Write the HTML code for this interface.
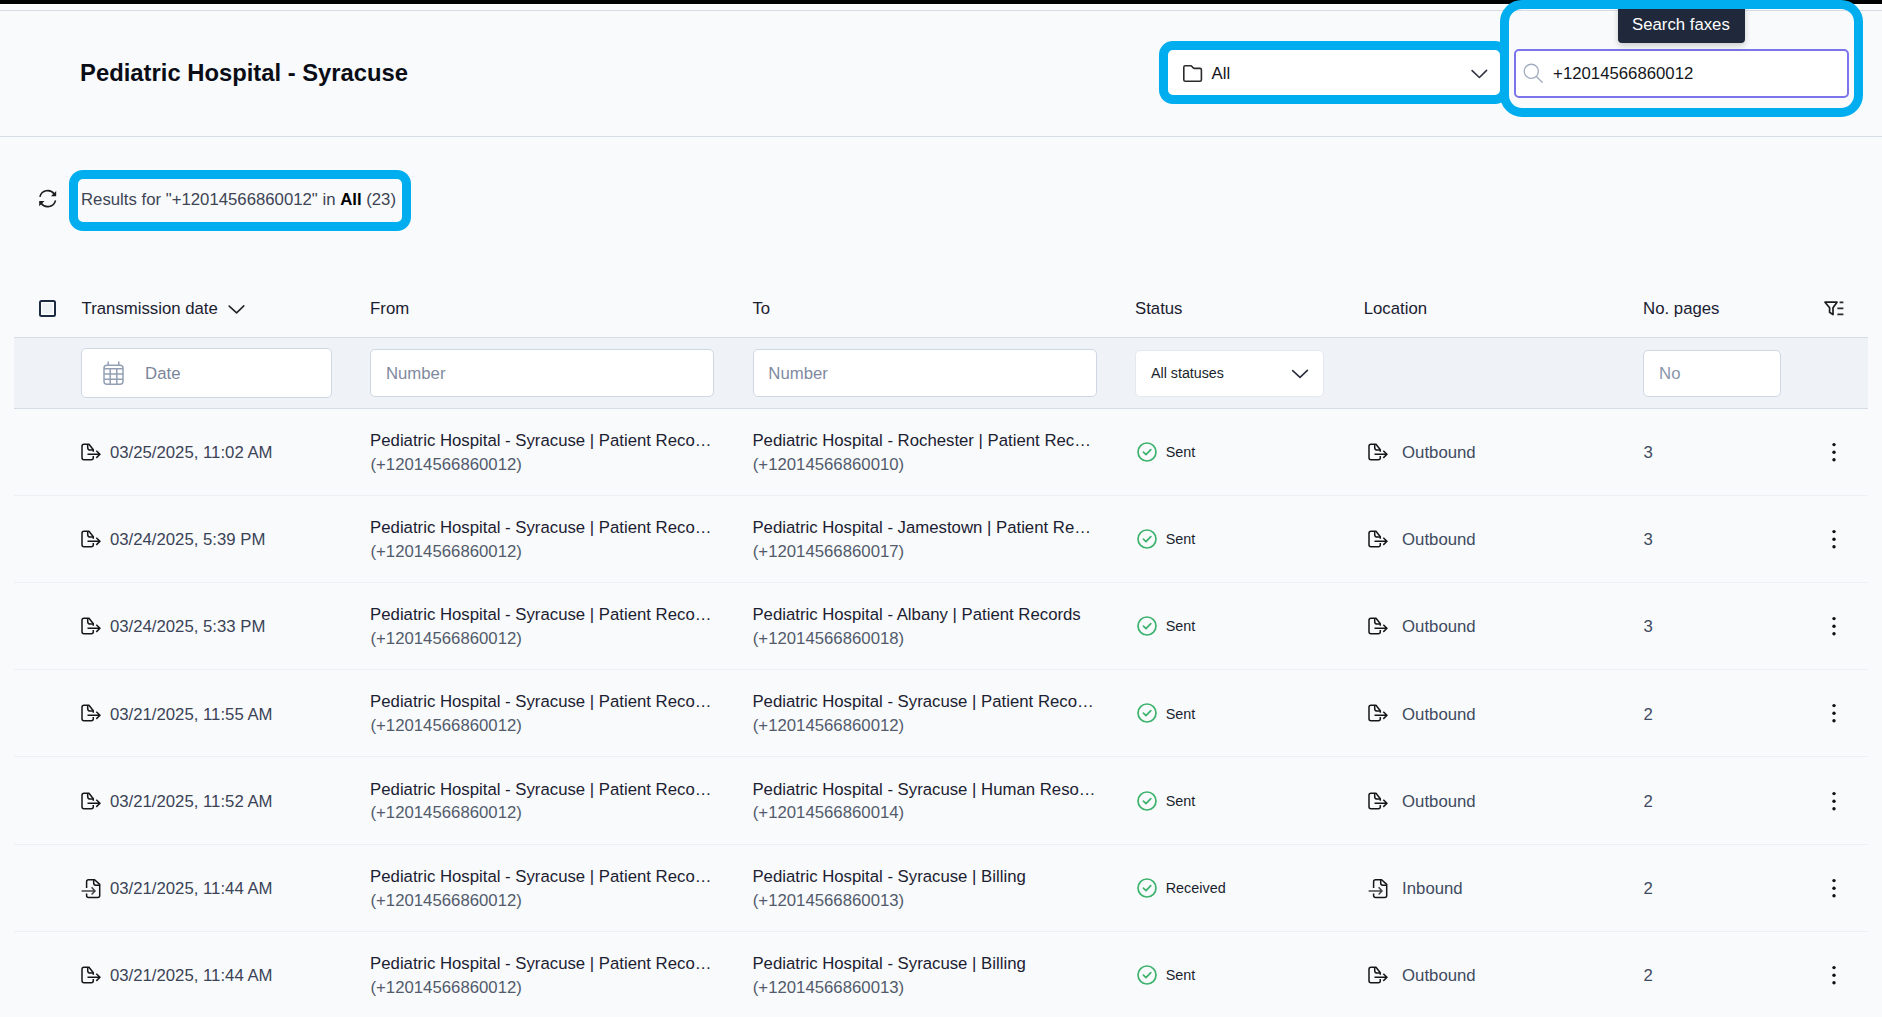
<!DOCTYPE html>
<html><head><meta charset="utf-8"><style>
html,body{margin:0;padding:0;}
body{width:1882px;height:1017px;overflow:hidden;position:relative;background:#f8fafc;font-family:"Liberation Sans", sans-serif;}
.t{position:absolute;white-space:nowrap;line-height:20px;}
b{font-weight:bold}
</style></head><body>
<div style="position:absolute;left:0px;top:0px;width:1882px;height:4px;background:#000"></div>
<div style="position:absolute;left:0px;top:4px;width:1882px;height:1px;background:#fff"></div>
<div style="position:absolute;left:0px;top:10px;width:1882px;height:1px;background:#d5dce6"></div>
<div style="position:absolute;left:0px;top:136px;width:1882px;height:1px;background:#d5dce6"></div>
<div class="t" style="left:80.1px;top:63.400000000000006px;font-size:23.8px;color:#0b0d16;font-weight:bold;">Pediatric Hospital - Syracuse</div>
<div style="position:absolute;left:1163px;top:46px;width:342px;height:54px;background:#fff;border-radius:4px"></div>
<svg style="position:absolute;left:1182px;top:64px;overflow:visible" width="22" height="19" viewBox="0 0 22 19"><path d="M1.8 3.2 Q1.8 1.8 3.2 1.8 H8.6 Q9.4 1.8 10 2.6 L10.8 3.6 Q11.4 4.4 12.2 4.4 H18 Q19.4 4.4 19.4 5.8 V15.8 Q19.4 17.2 18 17.2 H3.2 Q1.8 17.2 1.8 15.8 Z" fill="none" stroke="#2b2b2b" stroke-width="1.6" stroke-linejoin="round"/></svg>
<div class="t" style="left:1211.5px;top:64.2px;font-size:16.75px;color:#111318;font-weight:normal;">All</div>
<svg style="position:absolute;left:1470px;top:68px;overflow:visible" width="18" height="12" viewBox="0 0 18 12"><path d="M2.1 2.6 L9.4 9.5 L16.6 2.4" fill="none" stroke="#30343f" stroke-width="1.6" stroke-linecap="round" stroke-linejoin="round"/></svg>
<div style="position:absolute;left:1513.6px;top:49px;width:335.8px;height:48.5px;background:#fff;border:2px solid #7b74ea;border-radius:5px;box-sizing:border-box"></div>
<svg style="position:absolute;left:1522px;top:62px;overflow:visible" width="24" height="24" viewBox="0 0 24 24"><circle cx="9.3" cy="9.3" r="7.1" fill="none" stroke="#a2adbf" stroke-width="1.35"/><path d="M14.4 14.6 L20.2 20.3" stroke="#a2adbf" stroke-width="1.35" stroke-linecap="round"/></svg>
<div class="t" style="left:1553.1px;top:63.599999999999994px;font-size:16.75px;color:#141720;font-weight:normal;">+12014566860012</div>
<div style="position:absolute;left:1618px;top:2px;width:126.5px;height:41px;background:#1f293b;border-radius:4px;box-shadow:0 3px 6px rgba(0,0,0,0.18)"></div>
<div class="t" style="left:1632.0px;top:15.399999999999999px;font-size:16.75px;color:#ffffff;font-weight:normal;">Search faxes</div>
<svg style="position:absolute;left:37px;top:188px;overflow:visible" width="22" height="22" viewBox="0 0 22 22"><path d="M2.9 8.9 A8 8 0 0 1 17.2 6.0" fill="none" stroke="#1c1c1c" stroke-width="1.55"/><path d="M19.2 2.9 L19.2 8.2 L13.9 8.2 Z" fill="#1c1c1c"/><path d="M18.5 12.3 A8 8 0 0 1 4.15 15.2" fill="none" stroke="#1c1c1c" stroke-width="1.55"/><path d="M2.2 18.3 L2.2 13 L7.5 13 Z" fill="#1c1c1c"/></svg>
<div class="t" style="left:81.0px;top:189.7px;font-size:16.75px;color:#3d4454;font-weight:normal;">Results for "+12014566860012" in <b style="color:#000">All</b> (23)</div>
<div style="position:absolute;left:39.4px;top:300.2px;width:16.6px;height:16.6px;border:2.5px solid #1c2a42;border-radius:2.5px;background:#eef2f7;box-shadow:inset 0 0 0 1.2px #fff;box-sizing:border-box"></div>
<div class="t" style="left:81.6px;top:299.4px;font-size:16.75px;color:#1b2030;font-weight:normal;">Transmission date</div>
<svg style="position:absolute;left:228px;top:304px;overflow:visible" width="18" height="11" viewBox="0 0 18 11"><path d="M1.2 2.1 L8.6 8.9 L15.8 1.9" fill="none" stroke="#252525" stroke-width="1.6" stroke-linecap="round" stroke-linejoin="round"/></svg>
<div class="t" style="left:370.1px;top:299.4px;font-size:16.75px;color:#1b2030;font-weight:normal;">From</div>
<div class="t" style="left:752.4px;top:299.4px;font-size:16.75px;color:#1b2030;font-weight:normal;">To</div>
<div class="t" style="left:1135.0px;top:299.4px;font-size:16.75px;color:#1b2030;font-weight:normal;">Status</div>
<div class="t" style="left:1363.7px;top:299.4px;font-size:16.75px;color:#1b2030;font-weight:normal;">Location</div>
<div class="t" style="left:1643.1px;top:299.4px;font-size:16.75px;color:#1b2030;font-weight:normal;">No. pages</div>
<svg style="position:absolute;left:1823px;top:300px;overflow:visible" width="23" height="17" viewBox="0 0 23 17"><path d="M2 2.2 H14 L10 7.8 V14.6 L6.6 12.2 V7.8 Z" fill="none" stroke="#1c1c1c" stroke-width="1.7" stroke-linejoin="round"/><path d="M16.6 2.4 H20.4 M14.4 8.4 H20.4 M14.4 14.4 H20.4" stroke="#2a2a2a" stroke-width="1.7"/></svg>
<div style="position:absolute;left:14px;top:337px;width:1854px;height:71.5px;background:#eff3f8;border-top:1px solid #d5dce6;border-bottom:1px solid #d5dce6;box-sizing:border-box"></div>
<div style="position:absolute;left:81px;top:348px;width:251px;height:49.8px;background:#fff;border:1.2px solid #cfd7e2;border-radius:5px;box-sizing:border-box"></div>
<svg style="position:absolute;left:102px;top:360px;overflow:visible" width="24" height="26" viewBox="0 0 24 26"><rect x="2" y="5.2" width="19" height="19" rx="3" fill="none" stroke="#93a0b4" stroke-width="1.5"/><path d="M2 8.8 H21 M2 14 H21 M2 19.2 H21 M8.2 8.8 V24.2 M14.8 8.8 V24.2 M6.2 1.4 V5.2 M16.8 1.4 V5.2" stroke="#93a0b4" stroke-width="1.5"/></svg>
<div class="t" style="left:145.1px;top:363.8px;font-size:16.75px;color:#7a8599;font-weight:normal;">Date</div>
<div style="position:absolute;left:370.3px;top:349.1px;width:344.2px;height:47.6px;background:#fff;border:1.2px solid #cfd7e2;border-radius:5px;box-sizing:border-box"></div>
<div class="t" style="left:385.9px;top:363.7px;font-size:16.75px;color:#7f8aa0;font-weight:normal;">Number</div>
<div style="position:absolute;left:752.8px;top:349.1px;width:344.2px;height:47.6px;background:#fff;border:1.2px solid #cfd7e2;border-radius:5px;box-sizing:border-box"></div>
<div class="t" style="left:768.3px;top:363.7px;font-size:16.75px;color:#7f8aa0;font-weight:normal;">Number</div>
<div style="position:absolute;left:1135.2px;top:349.5px;width:189.2px;height:47px;background:#fff;border:1px solid #e4e9f0;border-radius:5px;box-sizing:border-box"></div>
<div class="t" style="left:1151.0px;top:362.6px;font-size:14.25px;color:#1a1f2c;font-weight:normal;">All statuses</div>
<svg style="position:absolute;left:1291px;top:368px;overflow:visible" width="18" height="12" viewBox="0 0 18 12"><path d="M1.7 2.6 L9 9.4 L16.4 2.4" fill="none" stroke="#2a2e3c" stroke-width="1.6" stroke-linecap="round" stroke-linejoin="round"/></svg>
<div style="position:absolute;left:1643.4px;top:349.6px;width:138px;height:47px;background:#fff;border:1.2px solid #cfd7e2;border-radius:5px;box-sizing:border-box"></div>
<div class="t" style="left:1659.1px;top:363.6px;font-size:16.75px;color:#8a96aa;font-weight:normal;">No</div>
<svg style="position:absolute;left:81px;top:442.70000000000005px;overflow:visible" width="22" height="20" viewBox="0 0 22 20"><path d="M12.3 8.8 V6.8 L8 1.3 H3 Q1 1.3 1 3.3 V14.8 Q1 16.8 3 16.8 H10.3 Q12.3 16.8 12.3 14.8 V12.9" fill="none" stroke="#161616" stroke-width="1.5" stroke-linejoin="round"/><path d="M6.7 1.5 V4.4 Q6.7 7 9.3 7 H12.2" fill="none" stroke="#161616" stroke-width="1.5"/><path d="M6.5 11.3 H18.8 M15.3 7.7 L18.9 11.3 L15.3 14.9" fill="none" stroke="#161616" stroke-width="1.5"/></svg>
<svg style="position:absolute;left:1367.8px;top:442.70000000000005px;overflow:visible" width="22" height="20" viewBox="0 0 22 20"><path d="M12.3 8.8 V6.8 L8 1.3 H3 Q1 1.3 1 3.3 V14.8 Q1 16.8 3 16.8 H10.3 Q12.3 16.8 12.3 14.8 V12.9" fill="none" stroke="#161616" stroke-width="1.5" stroke-linejoin="round"/><path d="M6.7 1.5 V4.4 Q6.7 7 9.3 7 H12.2" fill="none" stroke="#161616" stroke-width="1.5"/><path d="M6.5 11.3 H18.8 M15.3 7.7 L18.9 11.3 L15.3 14.9" fill="none" stroke="#161616" stroke-width="1.5"/></svg>
<div class="t" style="left:109.9px;top:442.90000000000003px;font-size:16.75px;color:#3b4356;font-weight:normal;">03/25/2025, 11:02 AM</div>
<div class="t" style="left:370.1px;top:430.80000000000007px;font-size:16.75px;color:#1c2131;font-weight:normal;">Pediatric Hospital - Syracuse | Patient Reco…</div>
<div class="t" style="left:370.5px;top:454.50000000000006px;font-size:16.75px;color:#525a6b;font-weight:normal;">(+12014566860012)</div>
<div class="t" style="left:752.4px;top:430.80000000000007px;font-size:16.75px;color:#1c2131;font-weight:normal;">Pediatric Hospital - Rochester | Patient Rec…</div>
<div class="t" style="left:752.8px;top:454.50000000000006px;font-size:16.75px;color:#525a6b;font-weight:normal;">(+12014566860010)</div>
<svg style="position:absolute;left:1137px;top:441.70000000000005px;overflow:visible" width="20" height="20" viewBox="0 0 20 20"><circle cx="10" cy="10" r="9" fill="none" stroke="#3db26d" stroke-width="1.7"/><path d="M6.4 10.2 L9 12.6 L13.8 7.6" fill="none" stroke="#3db26d" stroke-width="1.7" stroke-linecap="round" stroke-linejoin="round"/></svg>
<div class="t" style="left:1165.7px;top:442.00000000000006px;font-size:14.4px;color:#1a1f2c;font-weight:normal;">Sent</div>
<div class="t" style="left:1402.1px;top:442.90000000000003px;font-size:16.75px;color:#3f4a60;font-weight:normal;">Outbound</div>
<div class="t" style="left:1643.4px;top:442.90000000000003px;font-size:16.75px;color:#3f4a60;font-weight:normal;">3</div>
<svg style="position:absolute;left:1830px;top:441.70000000000005px;overflow:visible" width="8" height="20" viewBox="0 0 8 20"><circle cx="4" cy="2.6" r="1.7" fill="#111"/><circle cx="4" cy="10.2" r="1.7" fill="#111"/><circle cx="4" cy="17.8" r="1.7" fill="#111"/></svg>
<div style="position:absolute;left:14px;top:495px;width:1854px;height:1px;background:#edf0f4"></div>
<svg style="position:absolute;left:81px;top:529.9px;overflow:visible" width="22" height="20" viewBox="0 0 22 20"><path d="M12.3 8.8 V6.8 L8 1.3 H3 Q1 1.3 1 3.3 V14.8 Q1 16.8 3 16.8 H10.3 Q12.3 16.8 12.3 14.8 V12.9" fill="none" stroke="#161616" stroke-width="1.5" stroke-linejoin="round"/><path d="M6.7 1.5 V4.4 Q6.7 7 9.3 7 H12.2" fill="none" stroke="#161616" stroke-width="1.5"/><path d="M6.5 11.3 H18.8 M15.3 7.7 L18.9 11.3 L15.3 14.9" fill="none" stroke="#161616" stroke-width="1.5"/></svg>
<svg style="position:absolute;left:1367.8px;top:529.9px;overflow:visible" width="22" height="20" viewBox="0 0 22 20"><path d="M12.3 8.8 V6.8 L8 1.3 H3 Q1 1.3 1 3.3 V14.8 Q1 16.8 3 16.8 H10.3 Q12.3 16.8 12.3 14.8 V12.9" fill="none" stroke="#161616" stroke-width="1.5" stroke-linejoin="round"/><path d="M6.7 1.5 V4.4 Q6.7 7 9.3 7 H12.2" fill="none" stroke="#161616" stroke-width="1.5"/><path d="M6.5 11.3 H18.8 M15.3 7.7 L18.9 11.3 L15.3 14.9" fill="none" stroke="#161616" stroke-width="1.5"/></svg>
<div class="t" style="left:109.9px;top:530.1px;font-size:16.75px;color:#3b4356;font-weight:normal;">03/24/2025, 5:39 PM</div>
<div class="t" style="left:370.1px;top:518.0px;font-size:16.75px;color:#1c2131;font-weight:normal;">Pediatric Hospital - Syracuse | Patient Reco…</div>
<div class="t" style="left:370.5px;top:541.6999999999999px;font-size:16.75px;color:#525a6b;font-weight:normal;">(+12014566860012)</div>
<div class="t" style="left:752.4px;top:518.0px;font-size:16.75px;color:#1c2131;font-weight:normal;">Pediatric Hospital - Jamestown | Patient Re…</div>
<div class="t" style="left:752.8px;top:541.6999999999999px;font-size:16.75px;color:#525a6b;font-weight:normal;">(+12014566860017)</div>
<svg style="position:absolute;left:1137px;top:528.9px;overflow:visible" width="20" height="20" viewBox="0 0 20 20"><circle cx="10" cy="10" r="9" fill="none" stroke="#3db26d" stroke-width="1.7"/><path d="M6.4 10.2 L9 12.6 L13.8 7.6" fill="none" stroke="#3db26d" stroke-width="1.7" stroke-linecap="round" stroke-linejoin="round"/></svg>
<div class="t" style="left:1165.7px;top:529.1999999999999px;font-size:14.4px;color:#1a1f2c;font-weight:normal;">Sent</div>
<div class="t" style="left:1402.1px;top:530.1px;font-size:16.75px;color:#3f4a60;font-weight:normal;">Outbound</div>
<div class="t" style="left:1643.4px;top:530.1px;font-size:16.75px;color:#3f4a60;font-weight:normal;">3</div>
<svg style="position:absolute;left:1830px;top:528.9px;overflow:visible" width="8" height="20" viewBox="0 0 8 20"><circle cx="4" cy="2.6" r="1.7" fill="#111"/><circle cx="4" cy="10.2" r="1.7" fill="#111"/><circle cx="4" cy="17.8" r="1.7" fill="#111"/></svg>
<div style="position:absolute;left:14px;top:582px;width:1854px;height:1px;background:#edf0f4"></div>
<svg style="position:absolute;left:81px;top:617.1px;overflow:visible" width="22" height="20" viewBox="0 0 22 20"><path d="M12.3 8.8 V6.8 L8 1.3 H3 Q1 1.3 1 3.3 V14.8 Q1 16.8 3 16.8 H10.3 Q12.3 16.8 12.3 14.8 V12.9" fill="none" stroke="#161616" stroke-width="1.5" stroke-linejoin="round"/><path d="M6.7 1.5 V4.4 Q6.7 7 9.3 7 H12.2" fill="none" stroke="#161616" stroke-width="1.5"/><path d="M6.5 11.3 H18.8 M15.3 7.7 L18.9 11.3 L15.3 14.9" fill="none" stroke="#161616" stroke-width="1.5"/></svg>
<svg style="position:absolute;left:1367.8px;top:617.1px;overflow:visible" width="22" height="20" viewBox="0 0 22 20"><path d="M12.3 8.8 V6.8 L8 1.3 H3 Q1 1.3 1 3.3 V14.8 Q1 16.8 3 16.8 H10.3 Q12.3 16.8 12.3 14.8 V12.9" fill="none" stroke="#161616" stroke-width="1.5" stroke-linejoin="round"/><path d="M6.7 1.5 V4.4 Q6.7 7 9.3 7 H12.2" fill="none" stroke="#161616" stroke-width="1.5"/><path d="M6.5 11.3 H18.8 M15.3 7.7 L18.9 11.3 L15.3 14.9" fill="none" stroke="#161616" stroke-width="1.5"/></svg>
<div class="t" style="left:109.9px;top:617.3000000000001px;font-size:16.75px;color:#3b4356;font-weight:normal;">03/24/2025, 5:33 PM</div>
<div class="t" style="left:370.1px;top:605.2px;font-size:16.75px;color:#1c2131;font-weight:normal;">Pediatric Hospital - Syracuse | Patient Reco…</div>
<div class="t" style="left:370.5px;top:628.9px;font-size:16.75px;color:#525a6b;font-weight:normal;">(+12014566860012)</div>
<div class="t" style="left:752.4px;top:605.2px;font-size:16.75px;color:#1c2131;font-weight:normal;">Pediatric Hospital - Albany | Patient Records</div>
<div class="t" style="left:752.8px;top:628.9px;font-size:16.75px;color:#525a6b;font-weight:normal;">(+12014566860018)</div>
<svg style="position:absolute;left:1137px;top:616.1px;overflow:visible" width="20" height="20" viewBox="0 0 20 20"><circle cx="10" cy="10" r="9" fill="none" stroke="#3db26d" stroke-width="1.7"/><path d="M6.4 10.2 L9 12.6 L13.8 7.6" fill="none" stroke="#3db26d" stroke-width="1.7" stroke-linecap="round" stroke-linejoin="round"/></svg>
<div class="t" style="left:1165.7px;top:616.4px;font-size:14.4px;color:#1a1f2c;font-weight:normal;">Sent</div>
<div class="t" style="left:1402.1px;top:617.3000000000001px;font-size:16.75px;color:#3f4a60;font-weight:normal;">Outbound</div>
<div class="t" style="left:1643.4px;top:617.3000000000001px;font-size:16.75px;color:#3f4a60;font-weight:normal;">3</div>
<svg style="position:absolute;left:1830px;top:616.1px;overflow:visible" width="8" height="20" viewBox="0 0 8 20"><circle cx="4" cy="2.6" r="1.7" fill="#111"/><circle cx="4" cy="10.2" r="1.7" fill="#111"/><circle cx="4" cy="17.8" r="1.7" fill="#111"/></svg>
<div style="position:absolute;left:14px;top:669px;width:1854px;height:1px;background:#edf0f4"></div>
<svg style="position:absolute;left:81px;top:704.3000000000001px;overflow:visible" width="22" height="20" viewBox="0 0 22 20"><path d="M12.3 8.8 V6.8 L8 1.3 H3 Q1 1.3 1 3.3 V14.8 Q1 16.8 3 16.8 H10.3 Q12.3 16.8 12.3 14.8 V12.9" fill="none" stroke="#161616" stroke-width="1.5" stroke-linejoin="round"/><path d="M6.7 1.5 V4.4 Q6.7 7 9.3 7 H12.2" fill="none" stroke="#161616" stroke-width="1.5"/><path d="M6.5 11.3 H18.8 M15.3 7.7 L18.9 11.3 L15.3 14.9" fill="none" stroke="#161616" stroke-width="1.5"/></svg>
<svg style="position:absolute;left:1367.8px;top:704.3000000000001px;overflow:visible" width="22" height="20" viewBox="0 0 22 20"><path d="M12.3 8.8 V6.8 L8 1.3 H3 Q1 1.3 1 3.3 V14.8 Q1 16.8 3 16.8 H10.3 Q12.3 16.8 12.3 14.8 V12.9" fill="none" stroke="#161616" stroke-width="1.5" stroke-linejoin="round"/><path d="M6.7 1.5 V4.4 Q6.7 7 9.3 7 H12.2" fill="none" stroke="#161616" stroke-width="1.5"/><path d="M6.5 11.3 H18.8 M15.3 7.7 L18.9 11.3 L15.3 14.9" fill="none" stroke="#161616" stroke-width="1.5"/></svg>
<div class="t" style="left:109.9px;top:704.5000000000001px;font-size:16.75px;color:#3b4356;font-weight:normal;">03/21/2025, 11:55 AM</div>
<div class="t" style="left:370.1px;top:692.4000000000001px;font-size:16.75px;color:#1c2131;font-weight:normal;">Pediatric Hospital - Syracuse | Patient Reco…</div>
<div class="t" style="left:370.5px;top:716.1px;font-size:16.75px;color:#525a6b;font-weight:normal;">(+12014566860012)</div>
<div class="t" style="left:752.4px;top:692.4000000000001px;font-size:16.75px;color:#1c2131;font-weight:normal;">Pediatric Hospital - Syracuse | Patient Reco…</div>
<div class="t" style="left:752.8px;top:716.1px;font-size:16.75px;color:#525a6b;font-weight:normal;">(+12014566860012)</div>
<svg style="position:absolute;left:1137px;top:703.3000000000001px;overflow:visible" width="20" height="20" viewBox="0 0 20 20"><circle cx="10" cy="10" r="9" fill="none" stroke="#3db26d" stroke-width="1.7"/><path d="M6.4 10.2 L9 12.6 L13.8 7.6" fill="none" stroke="#3db26d" stroke-width="1.7" stroke-linecap="round" stroke-linejoin="round"/></svg>
<div class="t" style="left:1165.7px;top:703.6px;font-size:14.4px;color:#1a1f2c;font-weight:normal;">Sent</div>
<div class="t" style="left:1402.1px;top:704.5000000000001px;font-size:16.75px;color:#3f4a60;font-weight:normal;">Outbound</div>
<div class="t" style="left:1643.4px;top:704.5000000000001px;font-size:16.75px;color:#3f4a60;font-weight:normal;">2</div>
<svg style="position:absolute;left:1830px;top:703.3000000000001px;overflow:visible" width="8" height="20" viewBox="0 0 8 20"><circle cx="4" cy="2.6" r="1.7" fill="#111"/><circle cx="4" cy="10.2" r="1.7" fill="#111"/><circle cx="4" cy="17.8" r="1.7" fill="#111"/></svg>
<div style="position:absolute;left:14px;top:756px;width:1854px;height:1px;background:#edf0f4"></div>
<svg style="position:absolute;left:81px;top:791.5000000000001px;overflow:visible" width="22" height="20" viewBox="0 0 22 20"><path d="M12.3 8.8 V6.8 L8 1.3 H3 Q1 1.3 1 3.3 V14.8 Q1 16.8 3 16.8 H10.3 Q12.3 16.8 12.3 14.8 V12.9" fill="none" stroke="#161616" stroke-width="1.5" stroke-linejoin="round"/><path d="M6.7 1.5 V4.4 Q6.7 7 9.3 7 H12.2" fill="none" stroke="#161616" stroke-width="1.5"/><path d="M6.5 11.3 H18.8 M15.3 7.7 L18.9 11.3 L15.3 14.9" fill="none" stroke="#161616" stroke-width="1.5"/></svg>
<svg style="position:absolute;left:1367.8px;top:791.5000000000001px;overflow:visible" width="22" height="20" viewBox="0 0 22 20"><path d="M12.3 8.8 V6.8 L8 1.3 H3 Q1 1.3 1 3.3 V14.8 Q1 16.8 3 16.8 H10.3 Q12.3 16.8 12.3 14.8 V12.9" fill="none" stroke="#161616" stroke-width="1.5" stroke-linejoin="round"/><path d="M6.7 1.5 V4.4 Q6.7 7 9.3 7 H12.2" fill="none" stroke="#161616" stroke-width="1.5"/><path d="M6.5 11.3 H18.8 M15.3 7.7 L18.9 11.3 L15.3 14.9" fill="none" stroke="#161616" stroke-width="1.5"/></svg>
<div class="t" style="left:109.9px;top:791.7000000000002px;font-size:16.75px;color:#3b4356;font-weight:normal;">03/21/2025, 11:52 AM</div>
<div class="t" style="left:370.1px;top:779.6000000000001px;font-size:16.75px;color:#1c2131;font-weight:normal;">Pediatric Hospital - Syracuse | Patient Reco…</div>
<div class="t" style="left:370.5px;top:803.3000000000001px;font-size:16.75px;color:#525a6b;font-weight:normal;">(+12014566860012)</div>
<div class="t" style="left:752.4px;top:779.6000000000001px;font-size:16.75px;color:#1c2131;font-weight:normal;">Pediatric Hospital - Syracuse | Human Reso…</div>
<div class="t" style="left:752.8px;top:803.3000000000001px;font-size:16.75px;color:#525a6b;font-weight:normal;">(+12014566860014)</div>
<svg style="position:absolute;left:1137px;top:790.5000000000001px;overflow:visible" width="20" height="20" viewBox="0 0 20 20"><circle cx="10" cy="10" r="9" fill="none" stroke="#3db26d" stroke-width="1.7"/><path d="M6.4 10.2 L9 12.6 L13.8 7.6" fill="none" stroke="#3db26d" stroke-width="1.7" stroke-linecap="round" stroke-linejoin="round"/></svg>
<div class="t" style="left:1165.7px;top:790.8000000000001px;font-size:14.4px;color:#1a1f2c;font-weight:normal;">Sent</div>
<div class="t" style="left:1402.1px;top:791.7000000000002px;font-size:16.75px;color:#3f4a60;font-weight:normal;">Outbound</div>
<div class="t" style="left:1643.4px;top:791.7000000000002px;font-size:16.75px;color:#3f4a60;font-weight:normal;">2</div>
<svg style="position:absolute;left:1830px;top:790.5000000000001px;overflow:visible" width="8" height="20" viewBox="0 0 8 20"><circle cx="4" cy="2.6" r="1.7" fill="#111"/><circle cx="4" cy="10.2" r="1.7" fill="#111"/><circle cx="4" cy="17.8" r="1.7" fill="#111"/></svg>
<div style="position:absolute;left:14px;top:844px;width:1854px;height:1px;background:#edf0f4"></div>
<svg style="position:absolute;left:81px;top:875.5px;overflow:visible" width="22" height="24" viewBox="0 0 22 24"><path d="M5.6 12 V5.7 Q5.6 3.7 7.6 3.7 H13.6 L18.7 8.4 V19.5 Q18.7 21.5 16.7 21.5 H7.6 Q5.6 21.5 5.6 19.5 V17.4" fill="none" stroke="#161616" stroke-width="1.5" stroke-linejoin="round"/><path d="M12.7 3.9 V7.1 Q12.7 9.2 14.8 9.2 H18.5" fill="none" stroke="#161616" stroke-width="1.5"/><path d="M0.6 14.9 H13.7 M10.6 11.3 L14 14.9 L10.6 18.5" fill="none" stroke="#444" stroke-width="1.5"/></svg>
<svg style="position:absolute;left:1367.8px;top:875.5px;overflow:visible" width="22" height="24" viewBox="0 0 22 24"><path d="M5.6 12 V5.7 Q5.6 3.7 7.6 3.7 H13.6 L18.7 8.4 V19.5 Q18.7 21.5 16.7 21.5 H7.6 Q5.6 21.5 5.6 19.5 V17.4" fill="none" stroke="#161616" stroke-width="1.5" stroke-linejoin="round"/><path d="M12.7 3.9 V7.1 Q12.7 9.2 14.8 9.2 H18.5" fill="none" stroke="#161616" stroke-width="1.5"/><path d="M0.6 14.9 H13.7 M10.6 11.3 L14 14.9 L10.6 18.5" fill="none" stroke="#444" stroke-width="1.5"/></svg>
<div class="t" style="left:109.9px;top:878.9000000000001px;font-size:16.75px;color:#3b4356;font-weight:normal;">03/21/2025, 11:44 AM</div>
<div class="t" style="left:370.1px;top:866.8000000000001px;font-size:16.75px;color:#1c2131;font-weight:normal;">Pediatric Hospital - Syracuse | Patient Reco…</div>
<div class="t" style="left:370.5px;top:890.5px;font-size:16.75px;color:#525a6b;font-weight:normal;">(+12014566860012)</div>
<div class="t" style="left:752.4px;top:866.8000000000001px;font-size:16.75px;color:#1c2131;font-weight:normal;">Pediatric Hospital - Syracuse | Billing</div>
<div class="t" style="left:752.8px;top:890.5px;font-size:16.75px;color:#525a6b;font-weight:normal;">(+12014566860013)</div>
<svg style="position:absolute;left:1137px;top:877.7px;overflow:visible" width="20" height="20" viewBox="0 0 20 20"><circle cx="10" cy="10" r="9" fill="none" stroke="#3db26d" stroke-width="1.7"/><path d="M6.4 10.2 L9 12.6 L13.8 7.6" fill="none" stroke="#3db26d" stroke-width="1.7" stroke-linecap="round" stroke-linejoin="round"/></svg>
<div class="t" style="left:1165.7px;top:878.0px;font-size:14.4px;color:#1a1f2c;font-weight:normal;">Received</div>
<div class="t" style="left:1402.1px;top:878.9000000000001px;font-size:16.75px;color:#3f4a60;font-weight:normal;">Inbound</div>
<div class="t" style="left:1643.4px;top:878.9000000000001px;font-size:16.75px;color:#3f4a60;font-weight:normal;">2</div>
<svg style="position:absolute;left:1830px;top:877.7px;overflow:visible" width="8" height="20" viewBox="0 0 8 20"><circle cx="4" cy="2.6" r="1.7" fill="#111"/><circle cx="4" cy="10.2" r="1.7" fill="#111"/><circle cx="4" cy="17.8" r="1.7" fill="#111"/></svg>
<div style="position:absolute;left:14px;top:931px;width:1854px;height:1px;background:#edf0f4"></div>
<svg style="position:absolute;left:81px;top:965.9000000000001px;overflow:visible" width="22" height="20" viewBox="0 0 22 20"><path d="M12.3 8.8 V6.8 L8 1.3 H3 Q1 1.3 1 3.3 V14.8 Q1 16.8 3 16.8 H10.3 Q12.3 16.8 12.3 14.8 V12.9" fill="none" stroke="#161616" stroke-width="1.5" stroke-linejoin="round"/><path d="M6.7 1.5 V4.4 Q6.7 7 9.3 7 H12.2" fill="none" stroke="#161616" stroke-width="1.5"/><path d="M6.5 11.3 H18.8 M15.3 7.7 L18.9 11.3 L15.3 14.9" fill="none" stroke="#161616" stroke-width="1.5"/></svg>
<svg style="position:absolute;left:1367.8px;top:965.9000000000001px;overflow:visible" width="22" height="20" viewBox="0 0 22 20"><path d="M12.3 8.8 V6.8 L8 1.3 H3 Q1 1.3 1 3.3 V14.8 Q1 16.8 3 16.8 H10.3 Q12.3 16.8 12.3 14.8 V12.9" fill="none" stroke="#161616" stroke-width="1.5" stroke-linejoin="round"/><path d="M6.7 1.5 V4.4 Q6.7 7 9.3 7 H12.2" fill="none" stroke="#161616" stroke-width="1.5"/><path d="M6.5 11.3 H18.8 M15.3 7.7 L18.9 11.3 L15.3 14.9" fill="none" stroke="#161616" stroke-width="1.5"/></svg>
<div class="t" style="left:109.9px;top:966.1000000000001px;font-size:16.75px;color:#3b4356;font-weight:normal;">03/21/2025, 11:44 AM</div>
<div class="t" style="left:370.1px;top:954.0000000000001px;font-size:16.75px;color:#1c2131;font-weight:normal;">Pediatric Hospital - Syracuse | Patient Reco…</div>
<div class="t" style="left:370.5px;top:977.7px;font-size:16.75px;color:#525a6b;font-weight:normal;">(+12014566860012)</div>
<div class="t" style="left:752.4px;top:954.0000000000001px;font-size:16.75px;color:#1c2131;font-weight:normal;">Pediatric Hospital - Syracuse | Billing</div>
<div class="t" style="left:752.8px;top:977.7px;font-size:16.75px;color:#525a6b;font-weight:normal;">(+12014566860013)</div>
<svg style="position:absolute;left:1137px;top:964.9000000000001px;overflow:visible" width="20" height="20" viewBox="0 0 20 20"><circle cx="10" cy="10" r="9" fill="none" stroke="#3db26d" stroke-width="1.7"/><path d="M6.4 10.2 L9 12.6 L13.8 7.6" fill="none" stroke="#3db26d" stroke-width="1.7" stroke-linecap="round" stroke-linejoin="round"/></svg>
<div class="t" style="left:1165.7px;top:965.2px;font-size:14.4px;color:#1a1f2c;font-weight:normal;">Sent</div>
<div class="t" style="left:1402.1px;top:966.1000000000001px;font-size:16.75px;color:#3f4a60;font-weight:normal;">Outbound</div>
<div class="t" style="left:1643.4px;top:966.1000000000001px;font-size:16.75px;color:#3f4a60;font-weight:normal;">2</div>
<svg style="position:absolute;left:1830px;top:964.9000000000001px;overflow:visible" width="8" height="20" viewBox="0 0 8 20"><circle cx="4" cy="2.6" r="1.7" fill="#111"/><circle cx="4" cy="10.2" r="1.7" fill="#111"/><circle cx="4" cy="17.8" r="1.7" fill="#111"/></svg>
<div style="position:absolute;left:68.9px;top:169.9px;width:342.1px;height:61.1px;border:9.2px solid #00aeef;border-radius:14px;box-sizing:border-box"></div>
<div style="position:absolute;left:1159px;top:41px;width:350px;height:63px;border:9.2px solid #00aeef;border-radius:14px;box-sizing:border-box"></div>
<div style="position:absolute;left:1500.3px;top:0px;width:362.4px;height:116.9px;border:9.2px solid #00aeef;border-radius:22px;box-sizing:border-box"></div>
</body></html>
